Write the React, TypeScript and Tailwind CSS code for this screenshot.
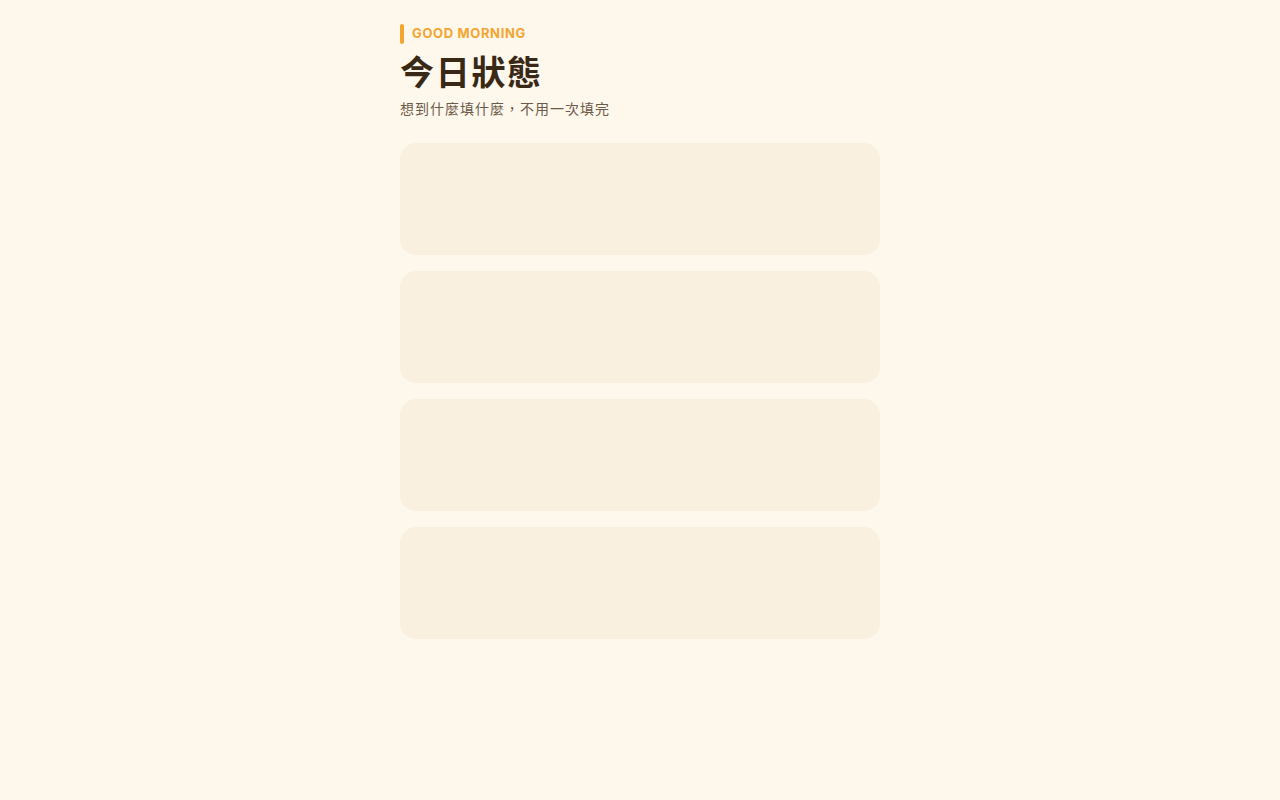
export default function App() {
  const cards = [0, 1, 2, 3];
  return (
    <div
      className="min-h-screen bg-[#fef7ec]"
      style={{ fontFamily: '"Noto Sans", "Noto Sans CJK TC", sans-serif' }}
    >
      <div className="mx-auto w-[480px] pt-6">
        <div className="flex items-center gap-2">
          <span className="h-5 w-1 rounded-full bg-[#f2a530]" />
          <span
            className="text-[13px] font-bold tracking-[0.05em] text-[#f2a530]"
            style={{ fontFamily: 'Inter, "Noto Sans", sans-serif' }}
          >
            GOOD MORNING
          </span>
        </div>
        <h1 className="mt-2 text-[34px] font-bold leading-[40px] tracking-[0.05em] text-[#3a2816]">今日狀態</h1>
        <p className="mt-[7px] text-sm leading-5 tracking-[1px] text-[#6b5a48]">想到什麼填什麼，不用一次填完</p>

        <div className="mt-6 flex flex-col gap-4">
          {cards.map((c) => (
            <div key={c} className="h-[112px] rounded-2xl bg-[#f9f0e0]" />
          ))}
        </div>
      </div>
    </div>
  );
}
